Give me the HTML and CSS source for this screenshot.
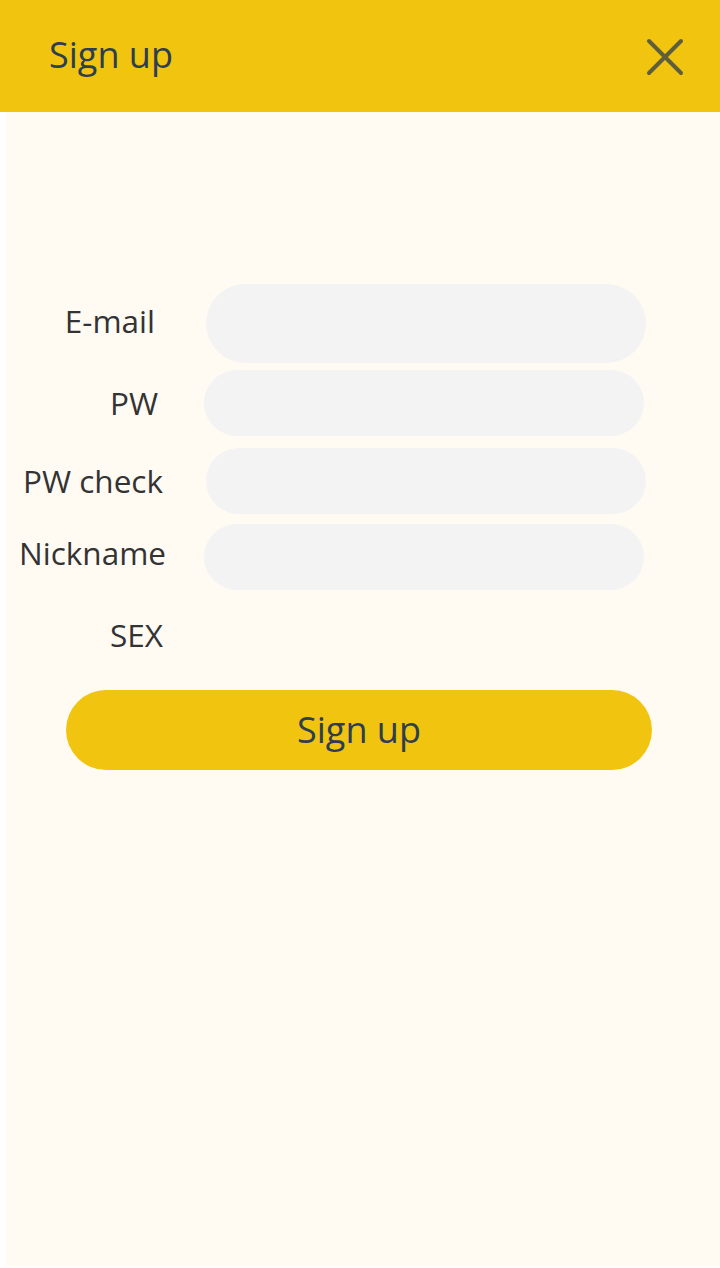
FILE: index.html
```html
<!DOCTYPE html>
<html lang="en">
<head>
<meta charset="utf-8">
<title>Sign up</title>
<link rel="stylesheet" href="styles.css">
</head>
<body>
<header class="topbar">
  <h1 class="title">Sign up</h1>
  <button class="close" aria-label="Close">
    <svg width="40" height="40" viewBox="0 0 40 40"><path d="M4 4 L36 36 M36 4 L4 36" stroke="#5e5e3b" stroke-width="4" stroke-linecap="round" fill="none"/></svg>
  </button>
</header>
<main class="panel">
  <form class="form">
    <div class="row row-email">
      <label class="label">E-mail</label>
      <input class="field" type="text">
    </div>
    <div class="row row-pw">
      <label class="label">PW</label>
      <input class="field" type="password">
    </div>
    <div class="row row-pwc">
      <label class="label">PW check</label>
      <input class="field" type="password">
    </div>
    <div class="row row-nick">
      <label class="label">Nickname</label>
      <input class="field" type="text">
    </div>
    <div class="row row-sex">
      <label class="label">SEX</label>
    </div>
    <button class="submit" type="button">Sign up</button>
  </form>
</main>
</body>
</html>
```

FILE: styles.css
```css
html, body {
  margin: 0;
  padding: 0;
  background: #ffffff;
  font-family: "Open Sans", "Noto Sans", sans-serif;
}

.topbar {
  height: 112px;
  background: #f1c40f;
  display: flex;
  align-items: center;
  justify-content: space-between;
  padding: 0 35px 0 49px;
  box-sizing: border-box;
}

.title {
  margin: 0;
  font-size: 36px;
  font-weight: 400;
  color: #2c3e50;
  line-height: 1;
  position: relative;
  top: -1px;
}

.close {
  border: 0;
  background: none;
  padding: 0;
  width: 40px;
  height: 40px;
  display: flex;
  position: relative;
  top: 1px;
}

.panel {
  margin-left: 6px;
  height: 1154px;
  background: #fffbf3;
}

.form {
  display: flex;
  flex-direction: column;
  padding-top: 172px;
}

.row {
  display: flex;
  align-items: center;
}

.label {
  text-align: right;
  font-size: 31.5px;
  color: #333333;
  line-height: 1;
  flex: none;
}

.field {
  flex: none;
  width: 440px;
  height: 66px;
  border: 0;
  border-radius: 33px;
  background: #f3f3f3;
  padding: 0;
  outline: none;
}

.row-email .label { width: 149px; position: relative; top: -3px; }
.row-email .field { margin-left: 51px; height: 79px; border-radius: 40px; }

.row-pw { margin-top: 7px; }
.row-pw .label { width: 152px; }
.row-pw .field { margin-left: 46px; }

.row-pwc { margin-top: 12px; }
.row-pwc .label { width: 157px; }
.row-pwc .field { margin-left: 43px; }

.row-nick { margin-top: 10px; }
.row-nick .label { width: 160px; position: relative; top: -4px; }
.row-nick .field { margin-left: 38px; }

.row-sex { margin-top: 12px; height: 66px; }
.row-sex .label { width: 157px; }

.submit {
  margin: 22px 0 0 60px;
  width: 586px;
  height: 80px;
  border: 0;
  border-radius: 40px;
  background: #f1c40f;
  color: #2c3e50;
  font-family: inherit;
  font-size: 36px;
  line-height: 1;
  padding: 0;
}
```
